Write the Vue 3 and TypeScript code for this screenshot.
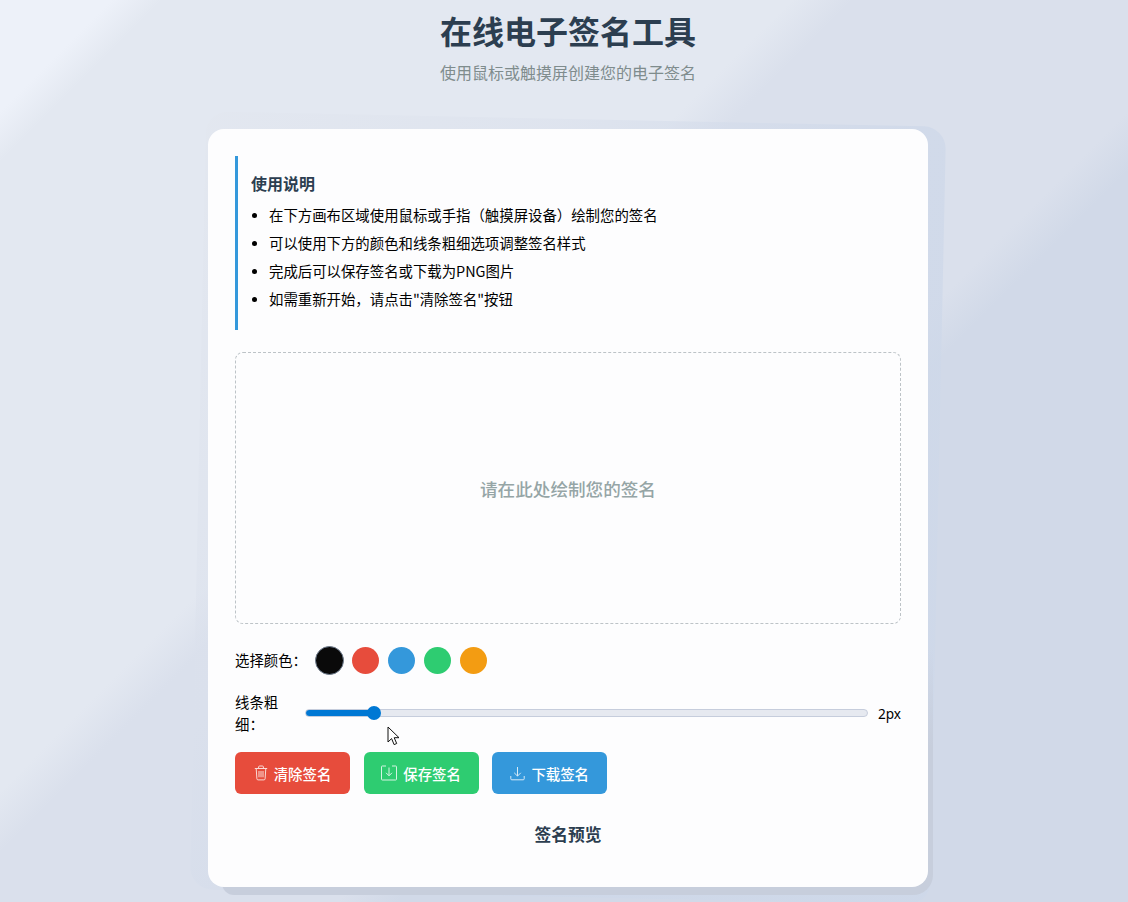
<script setup lang="ts">
import { ref } from 'vue'

const colors = ['#0a0a0a', '#e74c3c', '#3498db', '#2ecc71', '#f39c12']
const selected = ref('#0a0a0a')
const thickness = ref(2)
const tips = [
  '在下方画布区域使用鼠标或手指（触摸屏设备）绘制您的签名',
  '可以使用下方的颜色和线条粗细选项调整签名样式',
  '完成后可以保存签名或下载为PNG图片',
  '如需重新开始，请点击"清除签名"按钮',
]
</script>

<template>
  <div class="page">
    <header class="head">
      <h1>在线电子签名工具</h1>
      <p>使用鼠标或触摸屏创建您的电子签名</p>
    </header>
    <main class="card">
      <section class="help">
        <h3>使用说明</h3>
        <ul>
          <li v-for="t in tips" :key="t">{{ t }}</li>
        </ul>
      </section>
      <div class="canvas">请在此处绘制您的签名</div>
      <div class="row colors">
        <span class="label">选择颜色：</span>
        <button
          v-for="c in colors"
          :key="c"
          class="swatch"
          :class="{ active: selected === c }"
          :style="{ background: c }"
          @click="selected = c"
        ></button>
      </div>
      <div class="row thick">
        <span class="label narrow">线条粗细：</span>
        <input
          v-model.number="thickness"
          class="slider"
          type="range"
          min="1"
          max="10"
          :style="{ '--pct': ((thickness - 1) / 9) * 100 + '%' }"
        />
        <span class="val">{{ thickness }}px</span>
      </div>
      <div class="actions">
        <button class="btn red">
          <svg viewBox="0 0 14 16" width="14" height="16" fill="none" stroke="currentColor" stroke-width="1">
            <path d="M.8 3.5h12.4M4.6 3.5V2a1 1 0 0 1 1-1h2.8a1 1 0 0 1 1 1v1.5M2.2 3.5l.7 10.3a1.2 1.2 0 0 0 1.2 1.1h5.8a1.2 1.2 0 0 0 1.2-1.1l.7-10.3M5 6v6.3M7 6v6.3M9 6v6.3" />
          </svg>
          清除签名
        </button>
        <button class="btn green">
          <svg viewBox="0 0 16 16" width="16" height="16" fill="none" stroke="currentColor" stroke-width="1">
            <path d="M5 1H1.2a.7.7 0 0 0-.7.7v12.6a.7.7 0 0 0 .7.7h13.6a.7.7 0 0 0 .7-.7V1.700a.7.7 0 0 0-.7-.7H11M8 2.500v8M5 7.800l3 3 3-3" />
          </svg>
          保存签名
        </button>
        <button class="btn blue">
          <svg viewBox="0 0 15 16" width="15" height="16" fill="none" stroke="currentColor" stroke-width="1">
            <path d="M7.500 2v9M4.200 7.800l3.300 3.300 3.300-3.300M.8 11v2.800a1 1 0 0 0 1 1h11.400a1 1 0 0 0 1-1V11" />
          </svg>
          下载签名
        </button>
      </div>
      <h3 class="preview">签名预览</h3>
    </main>
    <svg class="cursor" width="14" height="20" viewBox="0 0 14 20">
      <path d="M1 1v15l3.6-3.4 2.500 6 2.600-1.100-2.500-5.800H12z" fill="#fff" stroke="#111" stroke-width="1" />
    </svg>
  </div>
</template>

<style>
html,
body {
  margin: 0;
  height: 100%;
}
</style>

<style scoped>
.page {
  position: relative;
  isolation: isolate;
  box-sizing: border-box;
  height: 902px;
  overflow: hidden;
  padding-left: 8px;
  background: linear-gradient(
    135deg,
    #edf1f9 0%,
    #edf1f9 5.5%,
    #e3e8f1 8%,
    #e3e8f1 39%,
    #dae0ec 42%,
    #dae0ec 61%,
    #d1d9e8 64%,
    #d1d9e8 100%
  );
  font-family: "Noto Sans CJK SC", "Liberation Sans", sans-serif;
  color: #000;
}
.head {
  height: 129px;
  box-sizing: border-box;
  padding-top: 9px;
  text-align: center;
}
.head h1 {
  margin: 0;
  font-size: 32px;
  line-height: 42px;
  font-weight: 700;
  color: #2c3e50;
}
.head p {
  margin: 9px 0 0;
  font-size: 16px;
  line-height: 24px;
  color: #7f8c8d;
}
.card {
  box-sizing: border-box;
  position: relative;
  width: 720px;
  height: 758px;
  margin: 0 auto;
  padding: 27px;
  background: #fdfdfe;
  border-radius: 16px;
}
.card::before {
  content: "";
  position: absolute;
  inset: -10px;
  z-index: -1;
  border-radius: 22px;
  background: linear-gradient(
    120deg,
    rgba(226, 230, 238, 0.4) 0%,
    rgba(218, 224, 236, 0.5) 30%,
    rgba(206, 216, 233, 0.75) 60%,
    rgba(206, 216, 233, 0.85) 100%
  );
  transform: rotate(1.2deg);
}
.card::after {
  content: "";
  position: absolute;
  inset: 520px -5px -8px 14px;
  z-index: -1;
  border-radius: 0 0 20px 12px;
  background: linear-gradient(to bottom, rgba(199, 206, 220, 0) 0%, #c7cedc 40%);
}
.help {
  box-sizing: border-box;
  height: 174px;
  margin-bottom: 22px;
  padding: 15px 13px;
  border-left: 3px solid #3498db;
}
.help h3 {
  margin: 0 0 6px;
  font-size: 16px;
  line-height: 24px;
  font-weight: 700;
  color: #2c3e50;
}
.help ul {
  margin: 0;
  padding-left: 18px;
  list-style: none;
}
.help li {
  position: relative;
  font-size: 14.4px;
  line-height: 28px;
}
.help li::before {
  content: "";
  position: absolute;
  left: -17px;
  top: 12px;
  width: 5px;
  height: 5px;
  border-radius: 50%;
  background: #000;
}
.canvas {
  box-sizing: border-box;
  height: 272px;
  display: flex;
  align-items: center;
  justify-content: center;
  border: 1px dashed #bdc3c7;
  border-radius: 8px;
  font-size: 17.6px;
  font-weight: 500;
  color: #95a5a6;
}
.row {
  display: flex;
  align-items: center;
}
.label {
  font-size: 14.4px;
  line-height: 22px;
}
.colors {
  height: 30px;
  margin-top: 21px;
  gap: 9px;
}
.colors .label {
  margin-right: 8px;
  width: 63px;
  white-space: nowrap;
}
.swatch {
  width: 27px;
  height: 27px;
  padding: 0;
  border: none;
  border-radius: 50%;
}
.swatch.active {
  box-sizing: border-box;
  width: 29px;
  height: 29px;
  margin-right: -1px;
  border: 1px solid #6f7d8f;
}
.thick {
  height: 42px;
  margin-top: 17px;
}
.narrow {
  width: 56px;
  flex: none;
}
.slider {
  -webkit-appearance: none;
  appearance: none;
  flex: 1;
  min-width: 0;
  height: 16px;
  margin: 0 10px 0 14px;
  background: transparent;
}
.slider::-webkit-slider-runnable-track {
  height: 8px;
  box-sizing: border-box;
  border-radius: 4px;
  border: 1px solid #c6cddc;
  background: linear-gradient(to right, #0078d4 var(--pct), #e6e9f0 var(--pct));
}
.slider::-webkit-slider-thumb {
  -webkit-appearance: none;
  appearance: none;
  width: 14px;
  height: 14px;
  margin-top: -4px;
  border-radius: 50%;
  background: #0078d4;
}
.val {
  font-size: 13.6px;
  font-family: "Noto Sans", "Liberation Sans", sans-serif;
}
.actions {
  display: flex;
  gap: 13.6px;
  margin-top: 18px;
}
.btn {
  box-sizing: border-box;
  display: flex;
  align-items: center;
  justify-content: center;
  gap: 6px;
  width: 115px;
  height: 42px;
  padding: 0;
  border: none;
  border-radius: 6px;
  color: #fff;
  font-family: inherit;
  font-size: 14.4px;
  font-weight: 500;
}
.btn svg {
  flex: none;
  opacity: 0.8;
}
.red {
  background: #e74c3c;
}
.green {
  background: #2ecc71;
}
.blue {
  background: #3498db;
}
.preview {
  margin: 28px 0 0;
  text-align: center;
  font-size: 16.8px;
  line-height: 24px;
  font-weight: 700;
  color: #2c3e50;
}
.cursor {
  position: absolute;
  left: 387px;
  top: 726px;
}
</style>
